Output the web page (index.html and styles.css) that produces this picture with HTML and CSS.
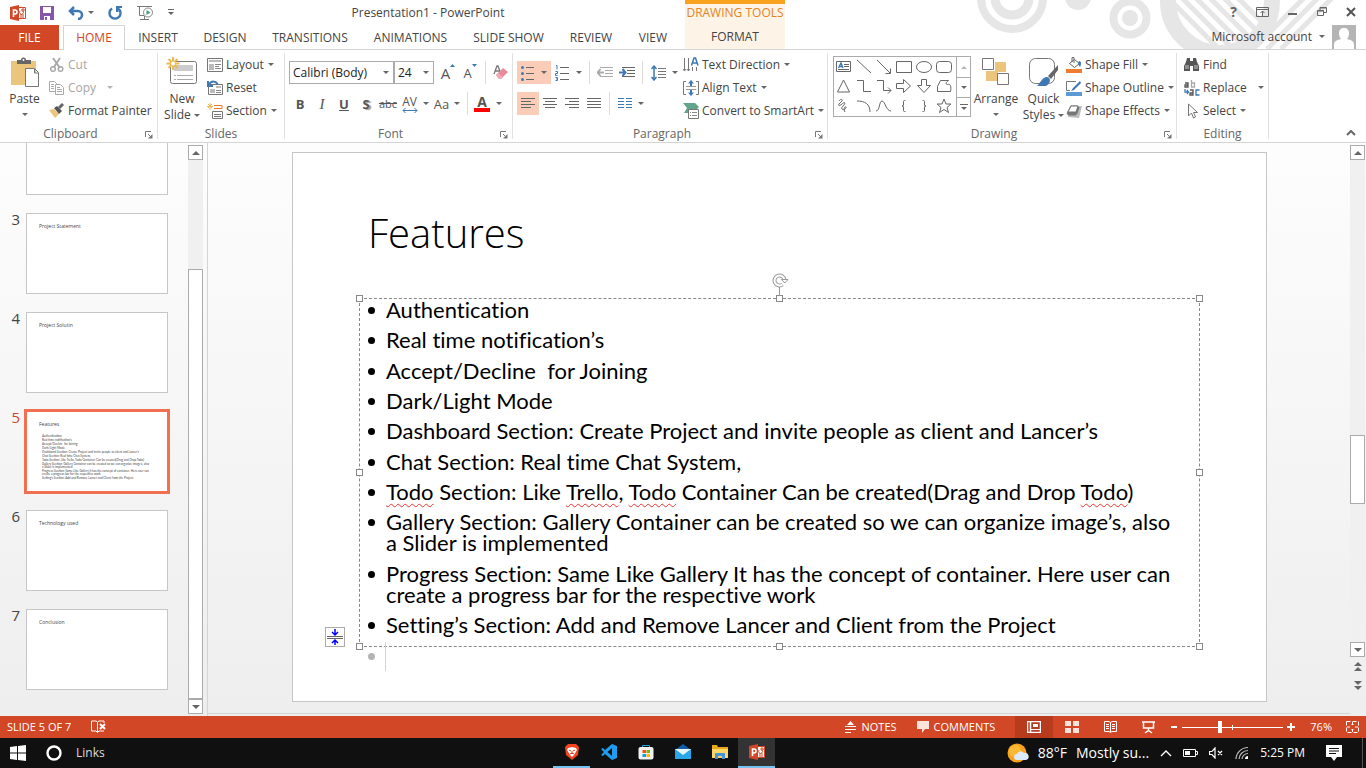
FILE: index.html
```html
<!DOCTYPE html>
<html lang="en">
<head>
<meta charset="utf-8">
<title>Presentation1 - PowerPoint</title>
<link rel="stylesheet" href="styles.css">
</head>
<body>
<svg class="defs" width="0" height="0" aria-hidden="true">
  <symbol id="launcher" viewBox="0 0 8 8"><path d="M.5 6V.5H6M3 3l3 3" fill="none" stroke="#777"/><path d="M7.500 3v4.500H3z" fill="#777"/></symbol>
  <symbol id="ppt" viewBox="0 0 16 16"><path d="M0 2l9-2v16l-9-2z" fill="#d24726"/><path d="M9 2.500h6.500v11H9" fill="#fff" stroke="#d24726"/><path d="M10 6a2 2 0 1 0 3 0M12 4h2v2h-2zM10 10h4M10 12h4" fill="none" stroke="#d24726"/><path d="M3.500 12V5h1.500a1.800 1.800 0 0 1 0 4H3.500" fill="none" stroke="#fff" stroke-width="1.600"/></symbol>
</svg>

<header class="head">
  <svg class="decor" viewBox="0 0 396 49" width="396" height="49" aria-hidden="true">
    <defs>
      <clipPath id="c1"><circle cx="250" cy="1" r="46"/></clipPath>
    </defs>
    <g fill="none" stroke="#e6e6e6">
      <circle cx="42" cy="-2" r="31" stroke-width="8"/>
      <circle cx="42" cy="-2" r="17" stroke-width="9"/>
      <circle cx="160" cy="18" r="16.500" stroke-width="8"/>
      <circle cx="250" cy="1" r="52" stroke-width="16"/>
      <g clip-path="url(#c1)" stroke-width="5"><path d="M180-20l80 80M194-20l80 80M208-20l80 80M222-20l80 80M236-20l80 80M250-20l80 80"/></g>
      <g stroke-width="5"><path d="M283 49l54-54M297 49l54-54M311 49l54-54"/></g>
    </g>
    <circle cx="108" cy="-3" r="13" fill="#e6e6e6"/><circle cx="160" cy="18" r="8" fill="#e6e6e6"/>
  </svg>
  <div class="head-left">
    <div class="title-row">
      <div class="qat">
        <svg width="16" height="16"><use href="#ppt"/></svg>
        <button aria-label="Save"><svg width="14" height="14"><path d="M0 0h14v14H0z" fill="#8656a8"/><path d="M3 1h8v6H3zM4 10h6v4H4z" fill="#fff"/><path d="M5 11h2v3H5z" fill="#8656a8"/></svg></button>
        <button aria-label="Undo"><svg width="26" height="14"><path d="M2 5h8a4 4 0 0 1 0 8M6 1L2 5l4 4" fill="none" stroke="#3e78b5" stroke-width="2.500"/><path d="M20 5h6l-3 3z" fill="#666"/></svg></button>
        <button aria-label="Repeat"><svg width="15" height="14"><path d="M4 2.500a5.500 5.500 0 1 0 6 0" fill="none" stroke="#3e78b5" stroke-width="2.400"/><path d="M8 6V0h6v2h-3.500v4z" fill="#3e78b5"/></svg></button>
        <button aria-label="Start from beginning"><svg width="17" height="16"><path d="M0 1.500h15M2.500 2v8.500H7M7.500 11v3M3 14.500h9" fill="none" stroke="#777"/><circle cx="11" cy="7.500" r="4.500" fill="#fff" stroke="#888"/><path d="M9.500 5l4 2.500-4 2.500z" fill="#4a9c7c"/></svg></button>
        <button aria-label="Customize toolbar"><svg width="6" height="7"><path d="M0 .5h6" stroke="#666"/><path d="M0 3h6L3 6z" fill="#666"/></svg></button>
      </div>
      <h1 class="app-title">Presentation1 - PowerPoint</h1>
    </div>
    <nav class="tabs">
      <button class="tab file">FILE</button><button class="tab active">HOME</button><button class="tab">INSERT</button><button class="tab">DESIGN</button><button class="tab">TRANSITIONS</button><button class="tab">ANIMATIONS</button><button class="tab">SLIDE SHOW</button><button class="tab">REVIEW</button><button class="tab">VIEW</button>
    </nav>
  </div>
  <div class="context"><span>DRAWING TOOLS</span><button class="tab">FORMAT</button></div>
  <div class="head-right">
    <div class="winctl">
      <button aria-label="Help" class="help">?</button>
      <button aria-label="Ribbon display options"><svg width="13" height="10"><path d="M.5.5h12v9H.5zM1 2.500h11M6.500 9V4M4.500 6l2-2 2 2" fill="none" stroke="#666"/></svg></button>
      <button aria-label="Minimize"><svg width="10" height="10"><path d="M0 7h9" stroke="#666" stroke-width="2"/></svg></button>
      <button aria-label="Restore"><svg width="10" height="10"><path d="M.5 3.500h6v5h-6zM3 3V.5h6.500v5H7M1 4h6M3 1h6" fill="none" stroke="#666"/></svg></button>
      <button aria-label="Close"><svg width="10" height="10"><path d="M1 1l8 8M9 1L1 9" stroke="#555" stroke-width="2"/></svg></button>
    </div>
    <button class="account">Microsoft account <i class="caret"></i><svg width="24" height="24"><path d="M0 0h24v24H0z" fill="#b5b5b5"/><path d="M12 3c3 0 5 2 5 5s-1 5-2 6c4 1 7 2 7 6v4H2v-4c0-4 3-5 7-6-1-1-2-3-2-6s2-5 5-5z" fill="#fff"/></svg></button>
  </div>
</header>

<section class="ribbon" aria-label="Home">
  <div class="group clipboard">
    <div class="body">
      <button class="big paste"><svg width="30" height="32"><path d="M1 4h25v24H1z" fill="#ecc57c"/><path d="M7 3h4a2.500 2.500 0 0 1 5 0h5v4H7z" fill="#666"/><circle cx="13.500" cy="3" r="1" fill="#fff"/><path d="M15.500 11.500h9l4 4v14h-13zM24.500 12v4h4" fill="#fff" stroke="#777"/></svg><span>Paste</span><i class="caret"></i></button>
      <div class="smalls">
        <button class="small off"><svg width="16" height="16"><path d="M4 1l7 10M11 1L5 10" stroke="#aaa" stroke-width="2"/><g fill="none" stroke="#aaa" stroke-width="1.500"><circle cx="4" cy="12" r="2.300"/><circle cx="11.500" cy="12" r="2.300"/></g></svg>Cut</button>
        <button class="small off"><svg width="16" height="16"><g fill="#fff" stroke="#aaa"><path d="M.5 1.500h5l2 2v8h-7zM2 4.500h3M2 6.500h3M2 8.500h3"/><path d="M6.500 4.500h5l3 3v7h-8zM8 9.500h5M8 7.500h3M8 11.500h5"/></g></svg>Copy<i class="caret far"></i></button>
        <button class="small"><svg width="16" height="16"><path d="M0 7l5-1 5 5-4 4z" fill="#ecc57c"/><path d="M5 5l3-2 5 5-3 3z" fill="#555"/><path d="M10 5l4-4" stroke="#666" stroke-width="3"/></svg>Format Painter</button>
      </div>
    </div>
    <footer>Clipboard<svg width="8" height="8"><use href="#launcher"/></svg></footer>
  </div>

  <div class="group slides">
    <div class="body">
      <button class="big newslide"><svg width="32" height="30"><rect x="4.500" y="4.500" width="26" height="22" rx="2" fill="#fff" stroke="#777"/><path d="M8 8h19v6H8z" fill="#ccc"/><path d="M8 18.500h2M11 18.500h16M8 22.500h2M11 22.500h16" stroke="#aaa"/><path d="M7 0v13M.5 6.500h13M2.500 2l9 9M11.500 2l-9 9" stroke="#ecb84f" stroke-width="2"/><circle cx="7" cy="6.500" r="2" fill="#fff"/></svg><span>New<br>Slide <i class="caret"></i></span></button>
      <div class="smalls">
        <button class="small"><svg width="16" height="16"><path d="M.5 1.500h15v13H.5z" fill="#fff" stroke="#777"/><path d="M2 3h12v2H2zM2 7h5v6H2z" fill="#bbb"/><path d="M8 7.500h6M8 9.500h4M8 11.500h6" stroke="#888"/></svg>Layout<i class="caret"></i></button>
        <button class="small"><svg width="16" height="16"><path d="M1.500 4.500h14v10h-14z" fill="#fff" stroke="#777"/><path d="M9 6h5v2H9zM3 9h5v4H3z" fill="#bbb"/><path d="M9 10.500h5M9 12.500h5" stroke="#888"/><path d="M1 1v5h5M1.500 5.500c3-6 8-4 9-1" fill="none" stroke="#3e78b5" stroke-width="2"/></svg>Reset</button>
        <button class="small"><svg width="16" height="16"><path d="M3 0v7M0 3.500h6M1 1l4 4M5 1L1 5" stroke="#ecb84f"/><path d="M7 2.500h8v3H7" fill="none" stroke="#e8792c"/><path d="M5.500 8.500h10v7h-10zM7 11.500h7M7 13.500h7" fill="none" stroke="#777"/></svg>Section<i class="caret"></i></button>
      </div>
    </div>
    <footer>Slides</footer>
  </div>

  <div class="group font">
    <div class="body rows">
      <div class="row">
        <label class="combo name"><select aria-label="Font"><option>Calibri (Body)</option></select><i class="caret"></i></label>
        <label class="combo size"><select aria-label="Font size"><option>24</option></select><i class="caret"></i></label>
        <button class="cell grow">A<svg width="5" height="3"><path d="M0 3l2.500-3L5 3z" fill="#3e78b5"/></svg></button>
        <button class="cell grow shrink">A<svg width="5" height="3"><path d="M0 0h5L2.500 3z" fill="#3e78b5"/></svg></button>
        <i class="sep"></i>
        <button class="cell" aria-label="Clear formatting"><svg width="16" height="16"><path d="M1 9l3-8h1l3 8M2.500 6h4" fill="none" stroke="#777" stroke-width="1.300"/><path d="M3 10l7-7 5 4-7 7H6z" fill="#e88a9a"/><path d="M3 10l2-2 5 4-2 2H6z" fill="#f0a9b5"/></svg></button>
      </div>
      <div class="row">
        <button class="cell"><b>B</b></button><button class="cell it">I</button><button class="cell un">U</button><button class="cell sh">S</button><button class="cell st">abc</button>
        <button class="cell av"><span>AV<svg width="16" height="5"><path d="M1 2.500h14M3.500 0L1 2.500 3.500 5M12.500 0L15 2.500 12.500 5" fill="none" stroke="#3e78b5"/></svg></span><i class="caret"></i></button>
        <button class="cell aa">Aa<i class="caret"></i></button>
        <i class="sep"></i>
        <button class="cell color"><span>A</span><i class="caret"></i></button>
      </div>
    </div>
    <footer>Font<svg width="8" height="8"><use href="#launcher"/></svg></footer>
  </div>

  <div class="group para">
    <div class="body">
      <div class="rows">
        <div class="row">
          <button class="cell wide on" aria-label="Bullets"><svg width="14" height="16"><g fill="#3e78b5"><circle cx="1.500" cy="2.500" r="1.500"/><circle cx="1.500" cy="8.500" r="1.500"/><circle cx="1.500" cy="14.500" r="1.500"/></g><path d="M5 2.500h8M5 8.500h8M5 14.500h8" stroke="#666"/></svg><i class="caret"></i></button>
          <button class="cell wide" aria-label="Numbering"><svg width="15" height="16"><path d="M1 .5h1v4M.5 6.500h2v2h-2v2h2M.5 12.500h2v3h-2M1 14h1" fill="none" stroke="#3e78b5"/><path d="M5 2.500h9M5 8.500h9M5 14.500h9" stroke="#666"/></svg><i class="caret"></i></button>
          <i class="sep"></i>
          <button class="cell" aria-label="Decrease indent"><svg width="16" height="12"><path d="M3 .5h13M8 3.500h8M8 6.500h8M3 9.500h13" stroke="#aaa"/><path d="M0 5.500h7M3.500 2L.7 5.500 3.500 9" fill="none" stroke="#aaa" stroke-width="2"/></svg></button>
          <button class="cell" aria-label="Increase indent"><svg width="16" height="12"><path d="M3 .5h13M8 3.500h8M8 6.500h8M3 9.500h13" stroke="#666"/><path d="M0 5.500h7M3.500 2l3 3.500-3 3.500" fill="none" stroke="#3e78b5" stroke-width="2"/></svg></button>
          <i class="sep"></i>
          <button class="cell wide" aria-label="Line spacing"><svg width="15" height="16"><path d="M3 1v14M.5 4L3 1l2.500 3M.5 12L3 15l2.500-3" fill="none" stroke="#3e78b5" stroke-width="1.500"/><path d="M7 3.500h8M7 6.500h8M7 9.500h8M7 12.500h8" stroke="#777"/></svg><i class="caret"></i></button>
        </div>
        <div class="row">
          <button class="cell on" aria-label="Align left"><svg width="14" height="11"><path d="M0 .5h14M0 3.500h10M0 6.500h14M0 9.500h10" stroke="#666"/></svg></button>
          <button class="cell" aria-label="Center"><svg width="14" height="11"><path d="M0 .5h14M2 3.500h10M0 6.500h14M2 9.500h10" stroke="#666"/></svg></button>
          <button class="cell" aria-label="Align right"><svg width="14" height="11"><path d="M0 .5h14M4 3.500h10M0 6.500h14M4 9.500h10" stroke="#666"/></svg></button>
          <button class="cell" aria-label="Justify"><svg width="14" height="11"><path d="M0 .5h14M0 3.500h14M0 6.500h14M0 9.500h14" stroke="#666"/></svg></button>
          <i class="sep"></i>
          <button class="cell wide" aria-label="Columns"><svg width="14" height="11"><path d="M0 .5h6M0 3.500h6M0 6.500h6M0 9.500h6M8 .5h6M8 3.500h6M8 6.500h6M8 9.500h6" stroke="#3e78b5"/></svg><i class="caret"></i></button>
        </div>
      </div>
      <div class="smalls">
        <button class="small"><svg width="16" height="16"><path d="M1.500 1v13M5.500 1v13M9.500 10v4M13.500 10v4M0 12l1.500 2L3 12M4 12l1.500 2L7 12" fill="none" stroke="#777"/><path d="M8.500 8.500L11 1h1.500L15 8.500M9.500 6h5" fill="none" stroke="#3e78b5" stroke-width="1.500"/></svg>Text Direction<i class="caret"></i></button>
        <button class="small"><svg width="16" height="16"><path d="M3 1.500H.5v13H3M13 1.500h2.500v13H13" fill="none" stroke="#777"/><path d="M3 6.500h10M3 9.500h10" stroke="#999"/><path d="M8 0l3 3.500H9V6H7V3.500H5zM8 16l3-3.500H9V10H7v2.500H5z" fill="#3e78b5"/></svg>Align Text<i class="caret"></i></button>
        <button class="small"><svg width="16" height="16"><path d="M0 0h12l4 4-2 2H6l-1 4H1l3-5z" fill="#62a58b"/><path d="M5.500 6.500h10v9h-10z" fill="#fff" stroke="#777"/><path d="M7 9.500h1M9 9.500h5M7 12.500h1M9 12.500h5" stroke="#888"/></svg>Convert to SmartArt<i class="caret"></i></button>
      </div>
    </div>
    <footer>Paragraph<svg width="8" height="8"><use href="#launcher"/></svg></footer>
  </div>

  <div class="group drawing">
    <div class="body">
      <div class="gallery">
        <div class="shapes">
          <button aria-label="Text box"><svg width="16" height="16"><path d="M.5 2.500h14v10H.5z"/><path d="M8 5.500h5M8 7.500h5M2 10.500h11"/><path d="M2.500 9L5 4l2 5M3.500 7.500h3" stroke="#3e78b5" stroke-width="1.400"/></svg></button>
          <button aria-label="Line"><svg width="16" height="16"><path d="M1 1l14 13"/></svg></button>
          <button aria-label="Arrow"><svg width="16" height="16"><path d="M1 1l13 13M14.500 9.500v5h-5"/></svg></button>
          <button aria-label="Rectangle"><svg width="16" height="16"><path d="M.5 2.500h15v11H.5z"/></svg></button>
          <button aria-label="Oval"><svg width="16" height="16"><ellipse cx="8" cy="8" rx="7.500" ry="5.500"/></svg></button>
          <button aria-label="Rounded rectangle"><svg width="16" height="16"><rect x=".5" y="2.500" width="15" height="11" rx="3"/></svg></button>
          <button aria-label="Triangle"><svg width="16" height="16"><path d="M7.500 2l6 12H1.500z"/></svg></button>
          <button aria-label="Elbow connector"><svg width="16" height="16"><path d="M1 2.500h6.500v11H15"/></svg></button>
          <button aria-label="Elbow arrow"><svg width="16" height="16"><path d="M1 2.500h6.500v10H15M12 9.500l3 3-3 3"/></svg></button>
          <button aria-label="Right arrow"><svg width="16" height="16"><path d="M.5 5.500h7v-4l7 6.500-7 6.500v-4h-7z"/></svg></button>
          <button aria-label="Down arrow"><svg width="16" height="16"><path d="M5.500 1.500h5v6h4L8 14.500 1.500 7.500h4z"/></svg></button>
          <button aria-label="Freeform"><svg width="16" height="16"><path d="M4.500 2.500h8c-3 2-3 4-1 4 3-1 4 2 3 7H1.500v-5z"/></svg></button>
          <button aria-label="Scribble"><svg width="16" height="16"><path d="M3 3c2-3 4-1 3 0L3 6c-1 2 1 2 3 0s4-2 2 1-3 2-2 4 5-1 4-2-3 2-1 5"/></svg></button>
          <button aria-label="Arc"><svg width="16" height="16"><path d="M1 3c8 0 13 3 13 11"/></svg></button>
          <button aria-label="Curve"><svg width="16" height="16"><path d="M0 13c4 0 3-10 6-10s4 10 9 10"/></svg></button>
          <button aria-label="Left brace"><svg width="16" height="16"><path d="M9.500 2.500h-1q-1 0-1 1V7q0 1-1.500 1 1.500 0 1.500 1v3.500q0 1 1 1h1"/></svg></button>
          <button aria-label="Right brace"><svg width="16" height="16"><path d="M6.500 2.500h1q1 0 1 1V7q0 1 1.500 1-1.500 0-1.500 1v3.500q0 1-1 1h-1"/></svg></button>
          <button aria-label="Star"><svg width="16" height="16"><path d="M8 1l2 5h5l-4 3.500 1.500 5L8 11.500l-4.500 3 1.500-5L1 6h5z"/></svg></button>
        </div>
        <div class="gscroll"><button class="off" aria-label="Up"><i class="caret up"></i></button><button aria-label="Down"><i class="caret"></i></button><button aria-label="More"><svg width="8" height="7"><path d="M0 .5h8" stroke="#666"/><path d="M1 3h6L4 6z" fill="#666"/></svg></button></div>
      </div>
      <button class="big arrange"><svg width="28" height="30"><path d="M13 5h11v10H13zM4 14h12v10H4z" fill="#ecc57c"/><path d="M.5 1.500h11v11H.5zM15.500 16.500h11v11h-11z" fill="#fff" stroke="#777"/></svg><span>Arrange</span><i class="caret"></i></button>
      <button class="big quick"><svg width="30" height="31"><rect x=".5" y="1.500" width="25" height="25" rx="6" fill="#fff" stroke="#777"/><path d="M29 8l-10 11 3 3 7-9z" fill="#666"/><path d="M8 29c2-1 5-9 10-9 5 1 3 7-1 9z" fill="#3e78b5"/></svg><span>Quick<br>Styles <i class="caret"></i></span></button>
      <div class="smalls">
        <button class="small"><svg width="16" height="16"><path d="M3.500 6.500l5-4 5 4-5 4zM6 5V.5h2V6" fill="#fff" stroke="#666"/><path d="M13 4c3 0 2 4 1 6l-2-3z" fill="#3e78b5"/><path d="M0 12h16v4H0z" fill="#ed7d31"/></svg>Shape Fill<i class="caret"></i></button>
        <button class="small"><svg width="16" height="16"><path d="M10 1.500H.5v9H4" fill="none" stroke="#777"/><path d="M14 1L7 8l-2 3 3-1 7-7z" fill="#3e78b5"/><path d="M0 12h16v4H0z" fill="#5b9bd5"/></svg>Shape Outline<i class="caret"></i></button>
        <button class="small"><svg width="16" height="16"><path d="M4 4l12-1-3 12-11-1z" fill="#bbb"/><path d="M4.500 2.500h7l2 2-2 6-2 2h-7l-2-2z" fill="#777"/><path d="M5 3h7l-2 6H2z" fill="#fff" stroke="#777"/></svg>Shape Effects<i class="caret"></i></button>
      </div>
    </div>
    <footer>Drawing<svg width="8" height="8"><use href="#launcher"/></svg></footer>
  </div>

  <div class="group editing">
    <div class="body">
      <div class="smalls">
        <button class="small"><svg width="16" height="16"><path d="M2 5l1-4h3v3h3V1h3l1 4 2 4v5H9V9H6v5H0V9z" fill="#555"/><path d="M2 8v4M4 8v4M11 8v4M13 8v4" stroke="#ccc"/></svg>Find</button>
        <button class="small"><svg width="16" height="16"><g fill="none" stroke-width="1.300"><path d="M1 3h3v4H1V5h3" stroke="#555"/><path d="M7.500 0v7h3V3h-3" stroke="#aaa"/><path d="M6 10h3v5H6v-2h3" stroke="#555"/><path d="M15.500 10H12v5h3.500" stroke="#3e78b5"/><path d="M1 9v3h3M3 10l1.500 2L3 14" stroke="#3e78b5"/></g></svg>Replace<i class="caret far"></i></button>
        <button class="small"><svg width="16" height="16"><path d="M4.500 1v12l3-3 2 5 2-1-2-4.500h4z" fill="#fff" stroke="#777"/></svg>Select<i class="caret"></i></button>
      </div>
    </div>
    <footer>Editing</footer>
  </div>
  <button class="collapse" aria-label="Collapse the ribbon"><svg width="10" height="6"><path d="M1 5l4-4 4 4" fill="none" stroke="#666" stroke-width="2"/></svg></button>
</section>

<main class="work">
  <aside class="pane">
    <ol class="thumbs">
      <li><span class="num"></span><div class="thumb"></div></li>
      <li><span class="num">3</span><div class="thumb"><h3>Project Statement</h3></div></li>
      <li><span class="num">4</span><div class="thumb"><h3>Project Solutin</h3></div></li>
      <li class="current"><span class="num">5</span><div class="thumb"><h3>Features</h3>
        <ul><li>Authentication</li><li>Real time notification’s</li><li>Accept/Decline  for Joining</li><li>Dark/Light Mode</li><li>Dashboard Section: Create Project and invite people as client and Lancer’s</li><li>Chat Section: Real time Chat System,</li><li>Todo Section: Like Trello, Todo Container Can be created(Drag and Drop Todo)</li><li>Gallery Section: Gallery Container can be created so we can organize image’s, also<br>a Slider is implemented</li><li>Progress Section: Same Like Gallery It has the concept of container. Here user can<br>create a progress bar for the respective work</li><li>Setting’s Section: Add and Remove Lancer and Client from the Project</li></ul></div></li>
      <li><span class="num">6</span><div class="thumb"><h3>Technology used</h3></div></li>
      <li><span class="num">7</span><div class="thumb"><h3>Conclusion</h3></div></li>
    </ol>
    <div class="scroll"><button aria-label="Scroll up"><i class="tri up"></i></button><div class="track side"><div class="grip"></div></div><button aria-label="Scroll down"><i class="tri"></i></button></div>
  </aside>
  <section class="stage">
    <article class="slide">
      <h2>Features</h2>
      <div class="textbox">
        <ul class="points">
          <li>Authentication</li>
          <li>Real time notification’s</li>
          <li>Accept/Decline  for Joining</li>
          <li>Dark/Light Mode</li>
          <li>Dashboard Section: Create Project and invite people as client and Lancer’s</li>
          <li>Chat Section: Real time Chat System,</li>
          <li><u>Todo</u> Section: Like <u>Trello</u>, <u>Todo</u> Container Can be created(Drag and Drop <u>Todo</u>)</li>
          <li>Gallery Section: Gallery Container can be created so we can organize image’s, also<br>a Slider is implemented</li>
          <li>Progress Section: Same Like Gallery It has the concept of container. Here user can<br>create a progress bar for the respective work</li>
          <li>Setting’s Section: Add and Remove Lancer and Client from the Project</li>
        </ul>
        <i class="h tl"></i><i class="h tc"></i><i class="h tr"></i><i class="h ml"></i><i class="h mr"></i><i class="h bl"></i><i class="h bc"></i><i class="h br"></i>
        <svg class="rotate" width="18" height="24"><path d="M7.500 15v9" stroke="#999"/><g fill="none"><path d="M12.500 8a5 5 0 1 0-2 4.500" stroke="#999" stroke-width="4"/><path d="M12.500 8a5 5 0 1 0-2 4.500" stroke="#fff" stroke-width="2"/></g><path d="M9.500 7.500h6.500L12.700 11z" fill="#fff" stroke="#999"/></svg>
        <button class="autofit" aria-label="AutoFit options"><svg width="18" height="18"><path d="M1 8.500h16M1 10.500h16" stroke="#666"/><path d="M9 1v5M6 4l3 3 3-3M9 17v-5M6 15l3-3 3 3" fill="none" stroke="#00f" stroke-width="1.500"/></svg></button>
        <i class="ghost-dot"></i><i class="ghost-caret"></i>
      </div>
    </article>
  </section>
  <div class="scroll stage-scroll"><button aria-label="Scroll up"><i class="tri up"></i></button><div class="track main"><div class="grip"></div></div><button aria-label="Scroll down"><i class="tri"></i></button>
    <button class="jump" aria-label="Previous slide"><svg width="8" height="9"><path d="M0 4l4-4 4 4zM0 9l4-4 4 4z" fill="#666"/></svg></button>
    <button class="jump" aria-label="Next slide"><svg width="8" height="9"><path d="M0 0h8L4 4zM0 5h8L4 9z" fill="#666"/></svg></button></div>
</main>

<div class="status">
  <span>SLIDE 5 OF 7</span>
  <button class="spell" aria-label="Spelling"><svg width="15" height="14"><path d="M6.500 2L5 1H.5v10H5l1.500 1.500L8 11h5M6.500 2v11M6.500 2L8 1h5v2" fill="none" stroke="#fff"/><path d="M9 4l5 5M14 4L9 9" stroke="#fff" stroke-width="2"/></svg></button>
  <button class="notes"><svg width="12" height="12"><path d="M2 4h7L5.500 0zM0 5h11v1H0zM0 8h11v1H0zM0 11h6v1H0z" fill="#fff"/></svg>NOTES</button>
  <button class="comments"><svg width="12" height="12"><path d="M0 0h12v8H8l-3 4V8H0z" fill="#fbe3dc"/></svg>COMMENTS</button>
  <div class="views">
    <button class="on" aria-label="Normal"><svg width="14" height="12"><path d="M.5.5h13v11H.5zM3.500 1v11" fill="none" stroke="#fff" stroke-width="1.500"/><path d="M6 3h5v3H6zM3 8h10v1H3z" fill="#fff"/></svg></button>
    <button aria-label="Slide sorter"><svg width="14" height="12"><path d="M0 0h6v5H0zM8 0h6v5H8zM0 7h6v5H0zM8 7h6v5H8z" fill="#fbe3dc"/></svg></button>
    <button aria-label="Reading view"><svg width="13" height="12"><path d="M.5.5H5l1.500 1L8 .5h4.500v10H8l-1.500 1-1.500-1H.5zM6.500 1v10M2 3.500h3M2 5.500h3M2 7.500h3M8 3.500h3M8 5.500h3M8 7.500h3" fill="none" stroke="#fff"/></svg></button>
    <button aria-label="Slide show"><svg width="13" height="13"><path d="M0 1h13M1.500 1v6h10V1M6.500 7v3M3 12l3.500-2.500L10 12" fill="none" stroke="#fff" stroke-width="1.500"/></svg></button>
  </div>
  <div class="zoom"><button aria-label="Zoom out"><svg width="7" height="10"><path d="M0 5h6" stroke="#fff" stroke-width="2"/></svg></button><input type="range" min="0" max="100" value="37" aria-label="Zoom"><button aria-label="Zoom in"><svg width="9" height="10"><path d="M0 5h8M4 1v8" stroke="#fff" stroke-width="2"/></svg></button></div>
  <span class="pct">76%</span>
  <button class="fit" aria-label="Fit to window"><svg width="14" height="14"><path d="M.5 1.500h12v11H.5z" fill="none" stroke="#fff" stroke-dasharray="4 2"/><path d="M6.500 2v3M6.500 9v3M1 7h3M9 7h3M5.500 4l1 1 1-1M5.500 10l1-1 1 1" fill="none" stroke="#fff"/></svg></button>
</div>

<footer class="taskbar">
  <div class="start">
    <button aria-label="Start"><svg width="16" height="16"><path d="M0 2l7-1v6.500H0zM8 1l8-1v7.500H8zM0 8.500h7V15l-7-1zM8 8.500h8V16l-8-1z" fill="#fff"/></svg></button>
    <button aria-label="Search"><svg width="16" height="16"><circle cx="8" cy="8" r="6.500" fill="none" stroke="#fff" stroke-width="2.400"/></svg></button>
    <span>Links</span>
  </div>
  <div class="apps">
    <button class="open" aria-label="Brave"><svg width="16" height="16"><path d="M4 0h8l3 3-1 8-6 5-6-5L1 3z" fill="#f4431e"/><path d="M4 4l4-1 4 1 1 2-3 5-2 2-2-2-3-5z" fill="#fff"/><path d="M5 6l2 1M11 6L9 7M8 7v2M6 10l2-1 2 1" stroke="#f4431e"/></svg></button>
    <button aria-label="Code"><svg width="16" height="16"><path d="M11 0l5 2v12l-5 2-7-6-2 2-2-1 3-3-3-3 2-1 2 2zM11 4L6.500 8l4.500 4z" fill="#1f9cf0" fill-rule="evenodd"/></svg></button>
    <button aria-label="Store"><svg width="16" height="16"><path d="M4.500 4V1.500h7V4" fill="none" stroke="#1fa2e0"/><rect y="3" x=".5" width="15" height="12.500" rx="2" fill="#f2f2f2"/><path d="M4.500 6H8v3H4.500z" fill="#f25022"/><path d="M8.500 6H12v3H8.500z" fill="#7fba00"/><path d="M4.500 10H8v3H4.500z" fill="#00a4ef"/><path d="M8.500 10H12v3H8.500z" fill="#ffb900"/></svg></button>
    <button aria-label="Mail"><svg width="16" height="16"><path d="M0 6l8-6 8 6z" fill="#0f5ea8"/><path d="M0 5h16v10H0z" fill="#2aa7ea"/><path d="M0 5h16l-8 6z" fill="#e8f4fb"/></svg></button>
    <button aria-label="File Explorer"><svg width="16" height="16"><path d="M0 1h5l1 2h10v11H0z" fill="#e8a91c"/><path d="M0 5h16v9H0z" fill="#ffd766"/><path d="M3 15V9h10v6h-3v-3H6v3z" fill="#4a94d8"/></svg></button>
    <button class="open focus" aria-label="PowerPoint"><svg width="16" height="16"><use href="#ppt"/></svg></button>
  </div>
  <div class="tray">
    <button class="weather"><svg width="22" height="20"><circle cx="10" cy="10" r="9.500" fill="#f7a41c"/><circle cx="8" cy="8" r="6" fill="#fbb936"/><path d="M10 17a3 3 0 0 1 0-6 4 4 0 0 1 7-1 3.500 3.500 0 0 1 2 7z" fill="#dce9f7"/></svg><span>88°F</span><span>Mostly su...</span></button>
    <button aria-label="Hidden icons"><svg width="12" height="8"><path d="M1 7l5-5 5 5" fill="none" stroke="#fff" stroke-width="1.400"/></svg></button>
    <button aria-label="Battery"><svg width="15" height="10"><path d="M.5 1.500h12v7H.5zM13 3.500h1.500v3H13" fill="none" stroke="#fff"/><path d="M2 3h5v4H2z" fill="#fff"/></svg></button>
    <button aria-label="Muted"><svg width="15" height="12"><path d="M.5 4.500H3l3-3.500v10L3 7.500H.5zM9 4l4 4M13 4L9 8" fill="none" stroke="#fff" stroke-width="1.200"/></svg></button>
    <button aria-label="Network"><svg width="14" height="14"><g fill="none" stroke="#bbb" stroke-width="1.200"><path d="M1 13A12 12 0 0 1 13 1.500M4 13a9 9 0 0 1 9-8.500M7 13a6 6 0 0 1 6-5.500"/></g><path d="M10 13a3 3 0 0 1 3-3v3z" fill="#fff"/></svg></button>
    <time>5:25 PM</time>
    <button class="bell" aria-label="Notifications"><svg width="16" height="16"><path d="M0 0h16v12h-5l-3 4-3-4H0z" fill="#fff"/><path d="M3 3.500h10M3 6h10M3 8.500h7" stroke="#111"/></svg></button>
    <i class="peek"></i>
  </div>
</footer>
</body>
</html>
```
FILE: styles.css
```css
* { box-sizing: border-box; }
body {
  margin: 0; height: 100vh; overflow: hidden;
  display: flex; flex-direction: column;
  font-family: "Open Sans", "Noto Sans", sans-serif; font-size: 12px; line-height: 16px; color: #444;
  background: #fff;
}
button {
  margin: 0; padding: 0; border: 0; background: none;
  font: inherit; color: inherit; display: flex; align-items: center; justify-content: center;
}
svg { display: block; flex: none; }
h1, h2, h3, ul, ol { margin: 0; padding: 0; font-weight: normal; list-style: none; }
.defs { position: absolute; }
.caret { flex: none; display: inline-block; width: 0; height: 0; border: 3px solid transparent; border-top-color: #666; border-bottom: 0; }

/* title bar and tabs */
.head { position: relative; display: flex; height: 50px; flex: none; border-bottom: 1px solid #d4d4d4; }
.decor { position: absolute; right: 0; top: 0; }
.head-left { width: 681px; }
.title-row { display: flex; height: 25px; align-items: center; }
.qat { display: flex; width: 175px; padding-left: 10px; gap: 14px; align-items: center; }
.app-title { flex: 1; text-align: center; font-size: 12px; }
.tabs { display: grid; grid-template-columns: 59px 66px 66px 68px 102px 99px 97px 68px 56px; height: 25px; }
.tab { height: 25px; }
.file { background: #d24726; color: #fff; }
.tabs .active { margin: 0 0 0 4px; background: #fff; border: 1px solid #d4d4d4; border-bottom: 0; color: #d24726; }
.context { position: relative; width: 100px; margin-left: 4px; border-top: 4px solid #f9a21f; background: #fdf3e7; display: flex; flex-direction: column; align-items: center; }
.context span { height: 21px; line-height: 18px; color: #e38422; }
.head-right { position: relative; flex: 1; display: flex; flex-direction: column; align-items: flex-end; }
.winctl { display: flex; height: 24px; align-items: center; gap: 19px; padding-right: 10px; }
.help { font-size: 14px; font-weight: bold; color: #666; }
.account { height: 25px; gap: 7px; padding-right: 10px; }

/* ribbon */
.ribbon { display: flex; flex: none; height: 93px; border-bottom: 1px solid #d4d4d4; padding-top: 3px; }
.group { position: relative; display: flex; flex-direction: column; border-right: 1px solid #e1e1e1; height: 86px; flex: none; }
.body { display: flex; flex: none; height: 69px; }
.group footer { position: relative; text-align: center; height: 17px; line-height: 24px; color: #666; padding-right: 16px; }
.slides footer, .editing footer { padding-right: 0; }
.group footer svg { position: absolute; right: 4px; bottom: 0; }
.smalls { display: grid; grid-template-rows: repeat(3, 23px); justify-items: start; }
.small { gap: 3px; white-space: nowrap; }
.small .caret { margin-left: 1px; }
.small .far { margin-left: 8px; }
.off { color: #a6a6a6; }
.off .caret { border-top-color: #b5b5b5; }
.big { flex-direction: column; justify-content: flex-start; padding-top: 4px; }
.big svg { height: 34px; }
.big .caret { margin-top: 6px; }
.big span .caret { margin: 0 0 2px; }
.clipboard { width: 158px; }
.paste { width: 49px; }
.slides { width: 127px; }
.newslide { width: 48px; margin-right: 1px; }
.font { width: 228px; }
.para { width: 315px; }
.drawing { width: 349px; }
.editing { width: 92px; }
.editing .smalls { padding-left: 7px; }
.rows { display: flex; flex-direction: column; gap: 8px; padding: 8px 0 0 4px; }
.row { display: flex; height: 23px; flex: none; }
.para .rows { width: 170px; }
.cell { width: 22px; height: 23px; gap: 5px; font-size: 13px; color: #555; }
.cell.wide { width: 34px; gap: 6px; }
.cell.on { background: #fbcdb8; }
.sep { width: 1px; margin: 0 4px; background: #dcdcdc; }
.combo { position: relative; display: flex; height: 23px; border: 1px solid #ababab; }
.combo select { appearance: none; width: 100%; border: 0; background: #fff; font: inherit; color: #222; padding: 0 3px; }
.combo .caret { position: absolute; right: 4px; top: 9px; }
.name { width: 105px; }
.size { width: 40px; margin-right: 3px; }
.grow { gap: 0; font-size: 15px; align-items: center; }
.grow svg { align-self: flex-start; margin-top: 3px; }
.grow.shrink { font-size: 13px; }
.it { font-style: italic; font-family: "Liberation Serif", serif; font-size: 15px; }
.un { text-decoration: underline; font-weight: bold; }
.sh { font-weight: bold; text-shadow: 2px 1px 1px #999; }
.st { text-decoration: line-through; font-size: 11px; }
.av { width: 32px; }
.av span { font-size: 12px; line-height: 13px; }
.aa { width: 32px; }
.color { width: 32px; gap: 6px; }
.color span { width: 16px; font-size: 14px; line-height: 13px; font-weight: bold; border-bottom: 4px solid #f00; }
.gallery { display: flex; width: 138px; height: 61px; margin: 3px 0 0 5px; border: 1px solid #ababab; }
.shapes { flex: 1; display: grid; grid-template-columns: repeat(6, 20px); }
.shapes svg { fill: none; stroke: #666; }
.gscroll { width: 14px; display: grid; grid-template-rows: 20px 20px 19px; border-left: 1px solid #ababab; }
.gscroll button + button { border-top: 1px solid #ababab; }
.up { transform: rotate(180deg); }
.arrange { width: 50px; }
.quick { width: 45px; }
.collapse { margin-left: auto; align-self: flex-end; padding: 0 10px 6px; }

/* workspace */
.work { flex: 1; min-height: 0; display: flex; background: linear-gradient(#fdfdfd, #eee); }
.pane { width: 208px; display: flex; border-right: 1px solid #d4d4d4; overflow: hidden; }
.thumbs { flex: 1; margin-top: -29px; display: flex; flex-direction: column; gap: 18px; }
.thumbs > li { display: flex; flex: none; }
.num { width: 26px; padding-right: 6px; text-align: right; font-size: 15px; line-height: 12px; }
.thumb { width: 142px; height: 81px; background: #fff; border: 1px solid #c6c6c6; padding: 8px 0 0 12px; font-family: "Open Sans", sans-serif; }
.thumb h3 { font-size: 5px; line-height: 9px; }
.thumb ul { margin-top: 6px; font-family: Lato, sans-serif; font-size: 3px; line-height: 3px; display: flex; flex-direction: column; gap: 1px; white-space: pre; }
.thumb ul li { padding-left: 3px; }
.current .num { color: #d24726; }
.current .thumb { outline: 3px solid #f07050; outline-offset: -1px; border-color: #fff; }
.scroll { width: 15px; margin: 2px 4px 2px 0; display: flex; flex-direction: column; flex: none; }
.scroll button { height: 15px; flex: none; border: 1px solid #ababab; background: #fff; }
.tri { border: 4px solid transparent; border-top-color: #666; border-bottom: 0; }
.track { flex: 1; display: flex; flex-direction: column; background: #f0f0f0; }
.grip { background: #fff; border: 1px solid #ababab; }
.side { padding-top: 109px; }
.side .grip { flex: 1; }
.main { padding-top: 275px; }
.main .grip { height: 69px; }
.stage-scroll { margin: 2px 1px 21px 0; }
.scroll .jump { border: 0; background: none; height: 19px; }
.stage { flex: 1; min-width: 0; padding: 9px 83px 0 84px; border-bottom: 1px solid #d4d4d4; margin-bottom: 2px; }
.slide { aspect-ratio: 975 / 550; background: #fff; border: 1px solid #c6c6c6; padding: 50px 66px 0; color: #000; }
.slide h2 { font-weight: 300; font-size: 40px; line-height: 60px; padding-left: 9px; }
.textbox { position: relative; height: 349px; margin-top: 35px; border: 1px dashed #888; font-family: Lato, sans-serif; font-size: 22px; line-height: 21px; color: #000; font-variant-ligatures: none; }
.points { height: 336px; display: flex; flex-direction: column; justify-content: space-between; white-space: pre; }
.points li { position: relative; padding-left: 26px; }
.points li::before { content: ""; position: absolute; left: 8px; top: 8px; width: 7px; height: 7px; border-radius: 50%; background: #000; }
.points u { text-decoration: underline wavy #e33 1px; text-underline-offset: 3px; }
.h { position: absolute; width: 7px; height: 7px; background: #fff; border: 1px solid #888; }
.tl, .ml, .bl { left: -4px; }
.tr, .mr, .br { right: -4px; }
.tl, .tc, .tr { top: -4px; }
.bl, .bc, .br { bottom: -4px; }
.tc, .bc { left: calc(50% - 4px); }
.ml, .mr { top: calc(50% - 4px); }
.rotate { position: absolute; left: calc(50% - 8px); top: -27px; }
.autofit { position: absolute; left: -35px; bottom: -1px; width: 20px; height: 20px; border: 1px solid #ababab; background: #fff; }
.ghost-dot { position: absolute; left: 8px; bottom: -14px; width: 7px; height: 7px; border-radius: 50%; background: #b4b4b4; }
.ghost-caret { position: absolute; left: 25px; bottom: -25px; width: 1px; height: 29px; background: #d4d4d4; }

/* status bar */
.status { flex: none; height: 22px; display: flex; align-items: center; padding: 0 6px 0 7px; background: #d24726; color: #fff; font-size: 11px; white-space: nowrap; }
.spell { margin: 0 auto 0 20px; }
.notes, .comments { gap: 5px; margin-right: 20px; }
.views { display: flex; align-self: stretch; }
.views button { width: 38px; }
.views .on { background: #b83b1d; }
.zoom { display: flex; align-items: center; gap: 4px; margin-left: 4px; }
.zoom input { appearance: none; width: 101px; height: 12px; margin: 0; background: linear-gradient(#fff, #fff) center / 100% 1px no-repeat, linear-gradient(#fff, #fff) center / 1px 5px no-repeat; }
.zoom input::-webkit-slider-thumb { appearance: none; width: 4px; height: 12px; background: #fff; }
.pct { margin: 0 14px; }

/* taskbar */
.taskbar { flex: none; height: 30px; display: flex; background: #101010; color: #fff; font-size: 12px; white-space: nowrap; }
.start { display: flex; align-items: center; width: 553px; padding-left: 10px; gap: 20px; color: #ddd; }
.start span { margin-left: -6px; }
.apps { display: flex; }
.apps button { width: 37px; border-bottom: 2px solid transparent; }
.apps .open { border-bottom-color: #76c1f0; }
.apps .focus { background: #333; }
.tray { margin-left: auto; display: flex; align-items: center; gap: 11px; }
.weather { gap: 9px; font-size: 14px; }
.bell { margin-left: 10px; }
.peek { align-self: stretch; width: 1px; background: #555; margin: 0 3px 0 9px; }
```
